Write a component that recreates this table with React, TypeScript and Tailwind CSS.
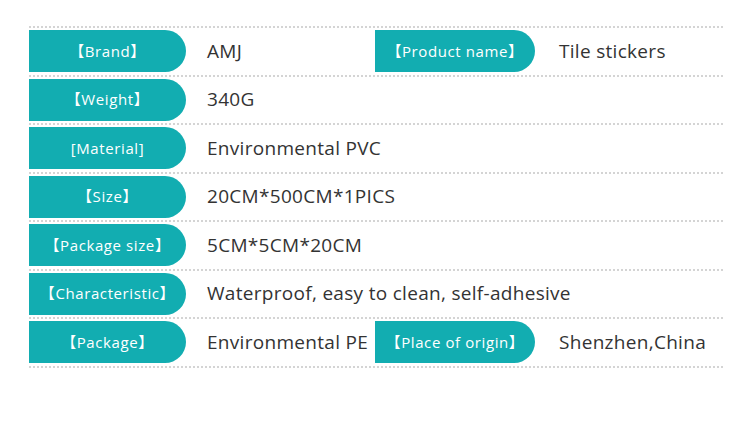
const rows: { label: string; value: string; label2?: string; value2?: string }[] = [
  { label: "【Brand】", value: "AMJ", label2: "【Product name】", value2: "Tile stickers" },
  { label: "【Weight】", value: "340G" },
  { label: "[Material]", value: "Environmental PVC" },
  { label: "【Size】", value: "20CM*500CM*1PICS" },
  { label: "【Package size】", value: "5CM*5CM*20CM" },
  { label: "【Characteristic】", value: "Waterproof, easy to clean, self-adhesive" },
  { label: "【Package】", value: "Environmental PE", label2: "【Place of origin】", value2: "Shenzhen,China" },
];

function Label({ text, wide }: { text: string; wide?: boolean }) {
  return (
    <div
      className={`${wide ? "w-[160px]" : "w-[157px]"} h-[42px] shrink-0 flex items-center justify-center rounded-r-full bg-[#12adb1] text-white text-[15px] tracking-[0.6px]`}
    >
      {text}
    </div>
  );
}

export default function App() {
  return (
    <div
      className="w-[750px] h-[429px] bg-white pt-[26px] pl-[29px]"
      style={{ fontFamily: '"Open Sans", "Noto Sans CJK SC", sans-serif' }}
    >
      <div className="w-[694px] border-t-2 border-dotted border-[#d4d4d4]">
        {rows.map((r) => (
          <div
            key={r.label}
            className="grid grid-cols-[346px_1fr] pt-[2px] pb-[3px] border-b-2 border-dotted border-[#d4d4d4] h-[48.5px]"
          >
            <div className="flex items-center">
              <Label text={r.label} />
              <span className="ml-[21px] text-[19px] tracking-[0.3px] text-[#333333] whitespace-nowrap">{r.value}</span>
            </div>
            {r.label2 && (
              <div className="flex items-center">
                <Label text={r.label2} wide />
                <span className="ml-[24px] text-[19px] tracking-[0.3px] text-[#333333] whitespace-nowrap">{r.value2}</span>
              </div>
            )}
          </div>
        ))}
      </div>
    </div>
  );
}
